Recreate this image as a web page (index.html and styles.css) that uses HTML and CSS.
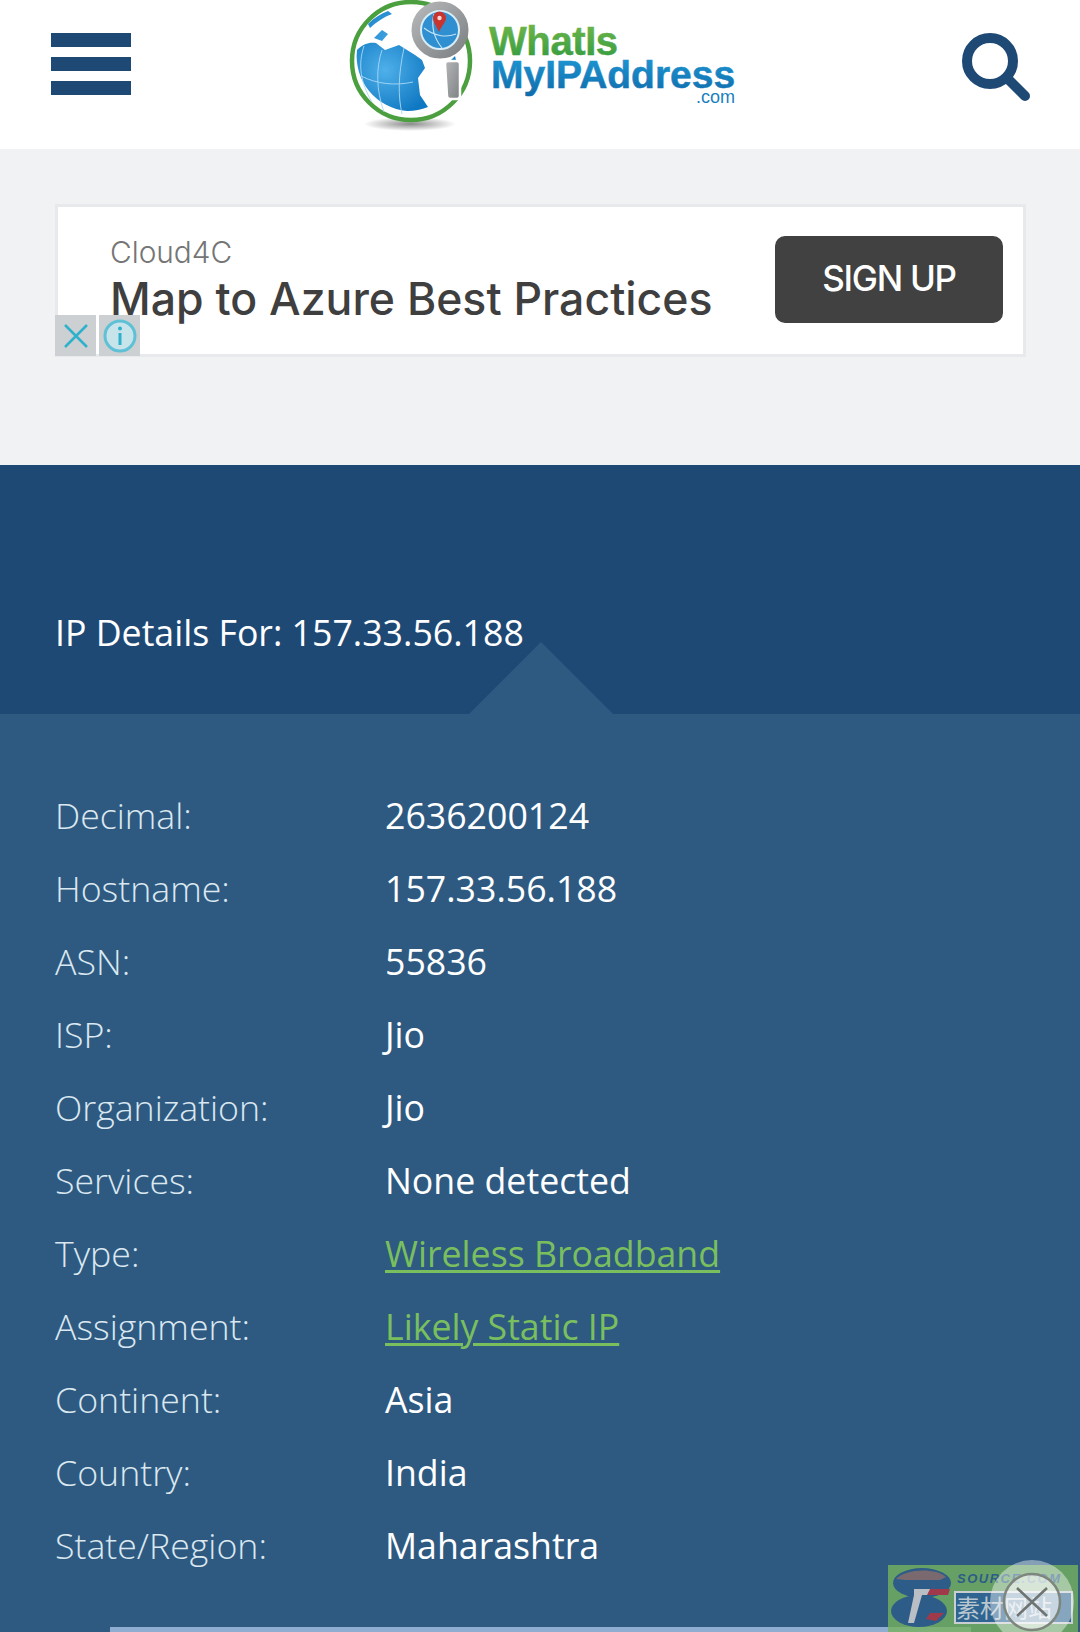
FILE: index.html
```html
<!DOCTYPE html>
<html lang="en">
<head>
<meta charset="utf-8">
<title>WhatIsMyIPAddress</title>
<link rel="stylesheet" href="styles.css">
</head>
<body>
<div class="page">
  <header class="header">
    <div class="burger"><span></span><span></span><span></span></div>
    <svg class="logo" width="400" height="149" viewBox="340 0 400 149">
      <defs>
        <radialGradient id="globe" cx="0.4" cy="0.4" r="0.7">
          <stop offset="0" stop-color="#4fb0ea"/><stop offset="1" stop-color="#0f78c2"/>
        </radialGradient>
        <linearGradient id="green" x1="0" y1="0" x2="0" y2="1">
          <stop offset="0" stop-color="#76b84c"/><stop offset="1" stop-color="#2f9a3f"/>
        </linearGradient>
        <linearGradient id="blue" x1="0" y1="0" x2="0" y2="1">
          <stop offset="0" stop-color="#1e9ad6"/><stop offset="1" stop-color="#0f6cab"/>
        </linearGradient>
        <linearGradient id="steel" x1="0" y1="0" x2="1" y2="1">
          <stop offset="0" stop-color="#b4b6b8"/><stop offset="1" stop-color="#7f8284"/>
        </linearGradient>
        <radialGradient id="shadow"><stop offset="0" stop-color="#8b8b8b"/><stop offset="1" stop-color="#fff"/></radialGradient>
      </defs>
      <ellipse cx="410" cy="124" rx="46" ry="7" fill="url(#shadow)"/>
      <circle cx="411" cy="61" r="59" fill="#fff" stroke="#4b9f3f" stroke-width="4.500"/>
      <path d="M357 50c6-6 12-8 19-7l9 7 14-5 16 10 7 5 3 8-7 10 2 17 8 12a55 55 0 0 1-21 4 55 55 0 0 1-50-61z" fill="url(#globe)"/>
      <path d="M368 24c6-6 12-10 20-13l4 3c-8 3-16 8-22 14zM374 38l8-8 6 4-6 7zM449 62l6-6 3 12-4 18-3-8z" fill="url(#globe)"/>
      <path d="M361 76c16 8 34 10 52 6M372 102c-12-20-14-38-8-56M384 112c-8-22-8-44-2-62M402 114c-4-18-4-38 2-66" fill="none" stroke="#a8d8f5" stroke-width="0.900"/>
      <circle cx="440" cy="30" r="24" fill="#2f8fd0" stroke="url(#steel)" stroke-width="9"/>
      <circle cx="440" cy="30" r="19" fill="none" stroke="#d6ecf8" stroke-width="2"/>
      <path d="M424 28c10 8 22 10 32 6M434 14c-3 12 0 24 8 34" fill="none" stroke="#bfe2f6" stroke-width="1.200"/>
      <path d="M439 32c-3-7-6-10-6-14a6.500 6.500 0 0 1 13 0c0 4-4 7-7 14z" fill="#c9352e"/>
      <circle cx="439.500" cy="18" r="2.200" fill="#f3d9d6"/>
      <path d="M445 64q0-3 3-3h9q3 0 3 3l0 32q0 3-3 3h-7q-3 0-3-3z" fill="url(#steel)" stroke="#fff" stroke-width="2.500"/>
      <text class="logo-what" x="489" y="55" fill="url(#green)" stroke="url(#green)">WhatIs</text>
      <text class="logo-my" x="491" y="88" fill="url(#blue)" stroke="url(#blue)">MyIPAddress</text>
      <text class="logo-com" x="696" y="103" fill="#1a7fbe">.com</text>
    </svg>
    <svg class="search" width="72" height="72" viewBox="0 0 72 72">
      <circle cx="29" cy="29" r="23" fill="none" stroke="#1f4975" stroke-width="10"/>
      <path d="M46 46l18 18" fill="none" stroke="#1f4975" stroke-width="10" stroke-linecap="round"/>
    </svg>
  </header>

  <section class="ad-band">
    <div class="ad">
      <div class="ad-copy">
        <div class="ad-brand">Cloud4C</div>
        <div class="ad-title">Map to Azure Best Practices</div>
      </div>
      <div class="ad-button">SIGN UP</div>
      <div class="ad-controls">
        <span class="ad-tile">
          <svg width="30" height="30" viewBox="0 0 30 30"><path d="M4 4l22 22M26 4L4 26" fill="none" stroke="#2fb0cc" stroke-width="2.500"/></svg>
        </span>
        <span class="ad-tile">
          <svg width="36" height="36" viewBox="0 0 36 36"><circle cx="18" cy="18" r="15" fill="#c6e4ea" stroke="#5fc0d6" stroke-width="3"/><path d="M18 15v12" stroke="#2fb0cc" stroke-width="3"/><circle cx="18" cy="10.500" r="2" fill="#2fb0cc"/></svg>
        </span>
      </div>
    </div>
  </section>

  <section class="heading-band">
    <h1 class="heading">IP Details For: 157.33.56.188</h1>
    <div class="notch"></div>
  </section>

  <section class="details">
    <dl class="rows">
      <div class="row"><dt>Decimal:</dt><dd>2636200124</dd></div>
      <div class="row"><dt>Hostname:</dt><dd>157.33.56.188</dd></div>
      <div class="row"><dt>ASN:</dt><dd>55836</dd></div>
      <div class="row"><dt>ISP:</dt><dd>Jio</dd></div>
      <div class="row"><dt>Organization:</dt><dd>Jio</dd></div>
      <div class="row"><dt>Services:</dt><dd>None detected</dd></div>
      <div class="row"><dt>Type:</dt><dd><a href="#">Wireless Broadband</a></dd></div>
      <div class="row"><dt>Assignment:</dt><dd><a href="#">Likely Static IP</a></dd></div>
      <div class="row"><dt>Continent:</dt><dd>Asia</dd></div>
      <div class="row"><dt>Country:</dt><dd>India</dd></div>
      <div class="row"><dt>State/Region:</dt><dd>Maharashtra</dd></div>
    </dl>
    <div class="next-bar"></div>
  </section>

  <aside class="watermark">
    <svg class="wm-logo" width="62" height="62" viewBox="0 0 62 62">
      <ellipse cx="32" cy="16" rx="29" ry="15" fill="#2d5c88"/>
      <path d="M6 12c8-10 40-12 50-2l-6 3H16z" fill="#7a6a70"/>
      <ellipse cx="29" cy="44" rx="28" ry="16" fill="#2d5c88"/>
      <path d="M36 22h24l-2 6H36zM40 46h14l-8 8-10-2z" fill="#a03a4a"/>
      <path d="M24 22h16l-3 6h-5l-8 28h-6l6-28z" fill="#b9bfc4"/>
    </svg>
    <div class="wm-text">
      <div class="wm-top">SOURCE.COM</div>
      <div class="wm-box">素材网站</div>
    </div>
    <div class="wm-close">
      <svg width="60" height="60" viewBox="0 0 60 60">
        <circle cx="30" cy="30" r="28" fill="rgba(255,255,255,0.55)" stroke="#7d857c" stroke-width="2.500"/>
        <path d="M15 16l30 28M45 16L15 44" fill="none" stroke="#6e7472" stroke-width="2.500"/>
      </svg>
    </div>
  </aside>
</div>
</body>
</html>
```
FILE: styles.css
```css
* { box-sizing: border-box; }
html, body { margin: 0; padding: 0; }
body { font-family: "Open Sans", sans-serif; background: #2e5a82; }
.page { position: relative; width: 1080px; height: 1632px; overflow: hidden; display: flex; flex-direction: column; }

.header { height: 149px; flex: none; background: #fff; display: flex; align-items: flex-start; padding-left: 51px; }
.burger { width: 80px; margin-top: 33px; display: flex; flex-direction: column; gap: 10px; }
.burger span { display: block; height: 14px; background: #1f4975; }
.logo { margin-left: 209px; flex: none; }
.logo-what { font: 700 40px "Liberation Sans", sans-serif; letter-spacing: -0.400px; stroke-width: 0.500px; }
.logo-my { font: 700 39px "Liberation Sans", sans-serif; stroke-width: 0.500px; }
.logo-com { font: 400 18px "Liberation Sans", sans-serif; }
.search { margin-left: 221px; margin-top: 32px; flex: none; }

.ad-band { height: 316px; flex: none; background: #f0f2f4; padding: 55px 55px 0 55px; }
.ad { position: relative; height: 153px; width: 971px; background: #fff; border: 3px solid #e7e9ec; display: flex; align-items: flex-start; justify-content: space-between; padding: 28px 20px 0 52px; }
.ad-copy { font-family: Inter, sans-serif; }
.ad-brand { font-size: 29.800px; line-height: 34px; color: #757575; font-weight: 300; }
.ad-title { font-size: 44.600px; line-height: 60px; color: #3f3f3f; font-weight: 500; }
.ad-button { width: 228px; height: 87px; margin-top: 1px; background: #414141; border-radius: 10px; color: #fff; font: 500 35px/85px Inter, sans-serif; letter-spacing: -1.300px; text-align: center; }
.ad-controls { position: absolute; left: -3px; bottom: -2px; display: flex; gap: 3px; }
.ad-tile { width: 41px; height: 41px; background: #cdd0d2; display: flex; align-items: center; justify-content: center; }

.heading-band { position: relative; height: 249px; flex: none; background: #1f4975; }
.heading { position: absolute; left: 55px; top: 144px; margin: 0; font-size: 35.700px; line-height: 46px; font-weight: 400; color: #fff; }
.notch { position: absolute; left: 469px; bottom: 0; width: 144px; height: 72px; background: #2e5a82; clip-path: polygon(50% 0, 100% 100%, 0 100%); }

.details { flex: 1; position: relative; background: #2e5a82; }
.rows { margin: 0; padding: 64px 0 0 55px; }
.row { display: flex; height: 73px; align-items: center; font-size: 35.700px; }
.row dt { width: 330px; flex: none; font-weight: 300; color: #dbe8f0; }
.row dd { margin: 0; font-weight: 400; color: #fff; }
.row a { color: #7abf5e; text-decoration: underline; text-underline-offset: 3px; text-decoration-thickness: 3px; }
.next-bar { position: absolute; left: 110px; bottom: 0; width: 861px; height: 5px; background: #8fadd0; }

.watermark { position: absolute; left: 888px; top: 1565px; width: 190px; height: 67px; background: rgba(118, 178, 92, 0.8); display: flex; gap: 2px; padding: 2px 5px 0 2px; }
.wm-logo { flex: none; }
.wm-text { flex: 1; color: #2d5c88; padding-top: 4px; }
.wm-top { font: italic 700 13px/15px "Liberation Sans", sans-serif; letter-spacing: 1.500px; padding-left: 3px; white-space: nowrap; }
.wm-box { margin-top: 5px; height: 33px; font: 400 24px/28px "Noto Sans CJK SC", sans-serif; color: #b9c6cf; background: #2f6590; border: 2px solid #c9ced0; white-space: nowrap; }
.wm-close { position: absolute; left: 102px; top: -5px; width: 84px; height: 84px; border-radius: 50%; background: rgba(255, 255, 255, 0.42); display: flex; align-items: center; justify-content: center; }
```
